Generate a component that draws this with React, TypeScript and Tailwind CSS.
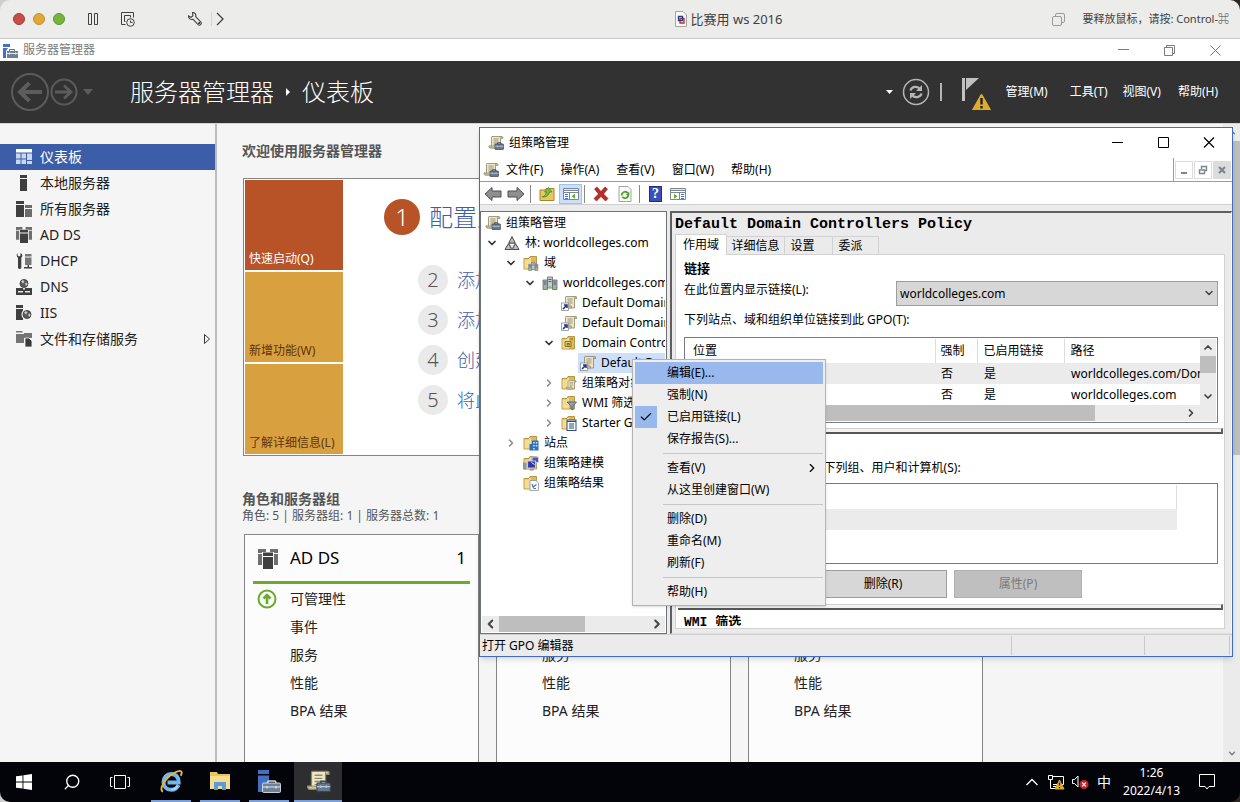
import type { ReactNode } from "react";
import { Check, ChevronDown, ChevronLeft, ChevronRight, ChevronUp, Search } from "lucide-react";
import clsx from "clsx";

/* ---------- small icons ---------- */

const Scroll = ({ x = 0, y = 0 }: { x?: number; y?: number }) => (
  <g transform={`translate(${x} ${y})`}>
    <path d="M4 1.5h9.5c1 0 1.5.8 1.2 1.8h-2.2V13H2.5c-1 0-1.6-.8-1.4-2h2.4V3C3.400 2 3.500 1.700 4 1.500z" fill="#efe6c2" stroke="#8a8468" strokeWidth=".8" />
    <path d="M12.500 3.300h2.200c.3-1-.2-1.800-1.200-1.800s-1.200 1-1 1.800zM1.100 11h8.400v2h-7c-1 0-1.600-1-1.400-2z" fill="#cfc59a" stroke="#8a8468" strokeWidth=".6" />
    <path d="M5.500 4h5M5.500 6h5M5.500 8h5M5.500 10h3" stroke="#8d8a7c" strokeWidth=".9" />
  </g>
);

const GpmcIcon = ({ className = "size-4" }: { className?: string }) => (
  <svg viewBox="0 0 16 16" className={clsx("shrink-0", className)}>
    <Scroll />
    <path d="M9.500 9V7.800h3.500V9" fill="none" stroke="#3a4a5c" />
    <rect x="7" y="9" width="8.500" height="5.500" rx=".6" fill="#66788c" stroke="#36465a" strokeWidth=".7" />
    <path d="M7 11.300h8.500M9.500 10.500v1.700M13 10.500v1.700" stroke="#b9c6d4" strokeWidth=".8" />
  </svg>
);

const ServerManagerIcon = ({ className = "size-[15px]" }: { className?: string }) => (
  <svg viewBox="0 0 24 24" className={clsx("shrink-0", className)}>
    <path d="M1 1h11v4H1zM1 6.500h11V23H1z" fill="#4470c4" />
    <path d="M10.500 15v-1.500c0-1 .6-1.500 1.500-1.500h5.500c1 0 1.500.5 1.500 1.500V15" fill="none" stroke="#d5dce4" strokeWidth="1.400" />
    <rect x="5.500" y="14" width="18" height="9.500" rx="1.200" fill="#6f8196" stroke="#eef1f4" strokeWidth=".8" />
    <path d="M6 18h17M10 17v2.500M19 17v2.500" stroke="#e2e8ee" strokeWidth="1.200" />
  </svg>
);

const Folder = ({ children }: { children?: ReactNode }) => (
  <svg viewBox="0 0 16 16" className="size-4 shrink-0">
    <path d="M1 3.500h5l1-2h6.500v12.500H1z" fill="#ddb95a" stroke="#a8842e" strokeWidth=".8" />
    <path d="M1.500 4.500h4l1-1.500H8v10.500H1.500z" fill="#f3dd94" />
    {children}
  </svg>
);

const LinkIcon = () => (
  <svg viewBox="0 0 16 16" className="size-4 shrink-0">
    <Scroll x={1} />
    <rect x=".5" y="8" width="7" height="7.500" fill="#fff" stroke="#8a8f99" strokeWidth=".8" />
    <path d="M2 14l3.500-3.500M3 10h3v3" fill="none" stroke="#26368c" strokeWidth="1.600" />
  </svg>
);

const ForestIcon = () => (
  <svg viewBox="0 0 16 16" className="size-4 shrink-0">
    <path d="M8 1.500l3.200 6.500H4.800zM4.500 8.500l3.300 6H1zM11.500 8.500l3.500 6H8.200z" fill="#bdbdbd" stroke="#4c4c4c" strokeWidth="1" />
    <path d="M5 8.500h6l-3 5.500z" fill="#efefef" stroke="#5c5c5c" strokeWidth=".7" />
  </svg>
);

const Towers = () => (
  <g>
    <path d="M1 5h4.500v9.500H1zM10.500 5H15v9.500h-4.500z" fill="#a4acb6" stroke="#5f6873" strokeWidth=".8" />
    <path d="M5.500 2H10.500v11H5.500z" fill="#c4cad2" stroke="#5f6873" strokeWidth=".8" />
    <path d="M2 7h2.500M2 9h2.500M11.500 7H14M11.500 9H14M6.500 4.500h3M6.500 6.500h3" stroke="#4b5663" strokeWidth=".9" />
    <path d="M3 12h2v2H3zM7 11h2v2H7zM12 12h2v2h-2z" fill="#7fd13a" />
  </g>
);

const DomainIcon = () => (
  <svg viewBox="0 0 16 16" className="size-4 shrink-0">
    <Towers />
  </svg>
);

const DomainsFolder = () => (
  <Folder>
    <g transform="translate(5 6) scale(.66)">
      <Towers />
    </g>
  </Folder>
);

const OuIcon = () => (
  <Folder>
    <path d="M4 6.500h6v5H4z" fill="#e9d082" stroke="#7c6420" strokeWidth=".9" />
    <path d="M6 8.500h2.500v1.500H6zM9 4h3" fill="none" stroke="#7c6420" />
  </Folder>
);

const GpoFolder = () => (
  <Folder>
    <g transform="translate(4.500 4.500) scale(.72)">
      <Scroll />
    </g>
  </Folder>
);

const WmiFolder = () => (
  <Folder>
    <path d="M6 7h9.500l-3.500 4v4l-2-1v-3z" fill="#8ba4bd" stroke="#43596f" strokeWidth=".8" />
  </Folder>
);

const StarterFolder = () => (
  <Folder>
    <rect x="6" y="5" width="9" height="10.500" fill="#f4f7fb" stroke="#31507f" />
    <path d="M6 6.500h9M8 9h5M8 11h5M8 13h5" stroke="#31507f" strokeWidth="1.100" />
  </Folder>
);

const SitesFolder = () => (
  <Folder>
    <path d="M9 5.500h6.500v10H9zM6.500 9H9v6.500H6.500z" fill="#2f6fc0" />
    <path d="M10.200 7h1.500v1.500h-1.500zM12.800 7h1.500v1.500h-1.500zM10.200 10h1.500v1.500h-1.500zM12.800 10h1.500v1.500h-1.500zM10.200 13h1.500v1.500h-1.500z" fill="#d9e9fb" />
  </Folder>
);

const ModelingIcon = () => (
  <Folder>
    <path d="M9 2h6.500v5.500H9z" fill="#4a52c8" stroke="#cfd3de" />
    <path d="M4.500 6h8v7h-8z" fill="#2c36b4" stroke="#c3c7d1" strokeWidth="1.200" />
    <path d="M0 7.500h3.500v7H0zM6.500 14h4v1.500h-4z" fill="#8f96a3" />
    <path d="M8.500 7.500l3 2" stroke="#e9ecf5" />
  </Folder>
);

const ResultsIcon = () => (
  <Folder>
    <path d="M7 5.500h6l2.500 2.500v7.500H7z" fill="#fbfcfd" stroke="#8a929c" strokeWidth=".8" />
    <path d="M9 9l1.500 4M13.500 9.500L10 12M10.500 13.500H13" fill="none" stroke="#4576b5" strokeWidth="1.200" />
  </Folder>
);

/* server manager role icons */

const DashboardIcon = () => (
  <svg viewBox="0 0 16 16" className="size-4" fill="#c9d8f2">
    <path d="M0 0h16v3.500H0z" fill="#fff" />
    <path d="M0 4.500h4.500v5H0zM5.500 4.500h4.500v5H5.500zM11 4.500h5V11h-5zM0 10.500h4.500V15H0zM5.500 10.500H10V15H5.500zM11 12h5v3h-5z" />
  </svg>
);

const LocalServerIcon = () => (
  <svg viewBox="0 0 16 16" className="size-4" fill="#3f3f3f">
    <path d="M4 0h7v3H4zM4 4h7v12H4z" />
  </svg>
);

const AllServersIcon = () => (
  <svg viewBox="0 0 16 16" className="size-4" fill="#3f3f3f">
    <path d="M0 0h8v3H0zM0 4h8v12H0z" />
    <path d="M9 4h7v3H9zM9 8h7v8H9z" fill="#6c6c6c" />
  </svg>
);

const AdDsIcon = ({ className = "size-4" }: { className?: string }) => (
  <svg viewBox="0 0 20 20" className={className} fill="#6f6f6f">
    <path d="M0 0h8v3H4v1H0zM12 0h8v4h-4V3h-4zM0 5h4v11H0zM16 5h4v11h-4z" />
    <path d="M5 3.500h10V7H5zM5 8h10v12H5z" fill="#404040" />
  </svg>
);

const DhcpIcon = () => (
  <svg viewBox="0 0 16 16" className="size-4">
    <path d="M1.500 0v2.500l1.500 1 1.500-1V0c2 .8 2.500 3.200.8 4.800V15c-.8 1.300-2.800 1.300-3.300 0V4.800C.3 3.500.300 1 1.500 0z" fill="#3f3f3f" />
    <path d="M9 1h6.500v2.500H9zM9 4.500h6.500V12H9z" fill="#777" />
    <path d="M8 14h8v1.500H8zM11.500 12h1.500v2h-1.500z" fill="#3f3f3f" />
  </svg>
);

const Globe = ({ cx, cy, r }: { cx: number; cy: number; r: number }) => (
  <g>
    <circle cx={cx} cy={cy} r={r} fill="#5a5a5a" stroke="#444" />
    <path d={`M${cx - 3} ${cy - 2}l2-1.500 1.500 1.500-1.500 2zM${cx + 1} ${cy}l2-1 .5 2-1.500 1.500z`} fill="#c9c9c9" />
  </g>
);

const DnsIcon = () => (
  <svg viewBox="0 0 16 16" className="size-4">
    <Globe cx={8} cy={4.500} r={4} />
    <path d="M0 9h16v7H0z" fill="#3f3f3f" />
    <path d="M2 12h5v1.500H2zM9 12h5v1.500H9zM7 9h2v1.500H7z" fill="#e6e6e6" />
  </svg>
);

const IisIcon = () => (
  <svg viewBox="0 0 16 16" className="size-4">
    <path d="M0 0h7v3H0zM0 4h7v11H0z" fill="#3f3f3f" />
    <circle cx="11" cy="9.500" r="5.500" fill="#f5f5f5" />
    <Globe cx={11} cy={9.500} r={4} />
  </svg>
);

const FilesIcon = () => (
  <svg viewBox="0 0 16 16" className="size-4">
    <path d="M0 0h6l1 1.500H0zM0 3h8V2h8v5H8v5H0z" fill="#747474" />
    <path d="M9 7h4l3 3v6H9z" fill="#3a3a3a" stroke="#f5f5f5" strokeWidth=".8" />
  </svg>
);

/* ---------- data ---------- */

const navItems = [
  { label: "仪表板", icon: <DashboardIcon />, active: true },
  { label: "本地服务器", icon: <LocalServerIcon /> },
  { label: "所有服务器", icon: <AllServersIcon /> },
  { label: "AD DS", icon: <AdDsIcon /> },
  { label: "DHCP", icon: <DhcpIcon /> },
  { label: "DNS", icon: <DnsIcon /> },
  { label: "IIS", icon: <IisIcon /> },
  { label: "文件和存储服务", icon: <FilesIcon />, expandable: true },
];

const steps = ["添加角色和功能", "添加要管理的其他服务器", "创建服务器组", "将此服务器连接到云服务"];

const roleRows = ["可管理性", "事件", "服务", "性能", "BPA 结果"];

type Node = { level: number; label: string; icon: ReactNode; state?: "open" | "closed"; selected?: boolean };

const tree: Node[] = [
  { level: 0, label: "组策略管理", icon: <GpmcIcon /> },
  { level: 1, label: "林: worldcolleges.com", icon: <ForestIcon />, state: "open" },
  { level: 2, label: "域", icon: <DomainsFolder />, state: "open" },
  { level: 3, label: "worldcolleges.com", icon: <DomainIcon />, state: "open" },
  { level: 4, label: "Default Domain Controllers Policy", icon: <LinkIcon /> },
  { level: 4, label: "Default Domain Policy", icon: <LinkIcon /> },
  { level: 4, label: "Domain Controllers", icon: <OuIcon />, state: "open" },
  { level: 5, label: "Default Domain Controllers Policy", icon: <LinkIcon />, selected: true },
  { level: 4, label: "组策略对象", icon: <GpoFolder />, state: "closed" },
  { level: 4, label: "WMI 筛选器", icon: <WmiFolder />, state: "closed" },
  { level: 4, label: "Starter GPO", icon: <StarterFolder />, state: "closed" },
  { level: 2, label: "站点", icon: <SitesFolder />, state: "closed" },
  { level: 2, label: "组策略建模", icon: <ModelingIcon /> },
  { level: 2, label: "组策略结果", icon: <ResultsIcon /> },
];

const links = [
  ["Domain Controllers", "否", "是", "worldcolleges.com/Domain Controllers"],
  ["worldcolleges.com", "否", "是", "worldcolleges.com"],
];

type MenuEntry = { label: string; checked?: boolean; active?: boolean; submenu?: boolean } | null;

const contextMenu: MenuEntry[] = [
  { label: "编辑(E)...", active: true },
  { label: "强制(N)" },
  { label: "已启用链接(L)", checked: true },
  { label: "保存报告(S)..." },
  null,
  { label: "查看(V)", submenu: true },
  { label: "从这里创建窗口(W)" },
  null,
  { label: "删除(D)" },
  { label: "重命名(M)" },
  { label: "刷新(F)" },
  null,
  { label: "帮助(H)" },
];

/* ---------- host bar and server manager ---------- */

const HostBar = () => (
  <header className="flex h-[39px] shrink-0 items-center border-b border-[#c9c9c9] bg-[#ececea] text-[#414141]">
    <div className="flex w-[54.4%] shrink-0 items-center pl-[13px]">
      <div className="flex gap-2">
        <button aria-label="关闭" className="size-3 rounded-full border border-[#a83c38] bg-[#c44f49]" />
        <button aria-label="最小化" className="size-3 rounded-full border border-[#c4902c] bg-[#dfa837]" />
        <button aria-label="全屏" className="size-3 rounded-full border border-[#5c962d] bg-[#76b43c]" />
      </div>
      <button aria-label="暂停" className="ml-[22px]">
        <svg viewBox="0 0 12 14" className="h-3.5 w-3" fill="none" stroke="currentColor">
          <path d="M1.500 1.500h3v11h-3zM7.500 1.500h3v11h-3z" />
        </svg>
      </button>
      <button aria-label="快照" className="ml-[21px]">
        <svg viewBox="0 0 16 16" className="size-4" fill="none" stroke="currentColor">
          <path d="M5.500 13.500h-4v-12h12v5M5.500 10.500h-1v-6h6v2" />
          <circle cx="10.500" cy="11.500" r="3.800" />
          <path d="M10.500 9.500v2h2" />
        </svg>
      </button>
      <button aria-label="设置" className="ml-[51px]">
        <svg viewBox="0 0 16 16" className="size-4" fill="none" stroke="currentColor" strokeWidth="1.100">
          <path d="M5.500 1.500C7.800 1.300 9.300 3.200 8.700 5.700l5.400 5.600c1 1.800-1.200 3.700-2.800 2.600L6.200 8.300C3.800 9 1.500 7.500 1.500 5l2.600 1.300 1.800-1.600z" />
          <circle cx="12.200" cy="12.200" r=".6" />
        </svg>
      </button>
      <div className="ml-2 h-3.5 w-px bg-[#d4d4d4]" />
      <button aria-label="展开" className="ml-1">
        <svg viewBox="0 0 8 14" className="h-3.5 w-2" fill="none" stroke="currentColor" strokeWidth="1.300">
          <path d="M1 1l6 6-6 6" />
        </svg>
      </button>
    </div>
    <div className="flex items-center gap-1">
      <svg viewBox="0 0 12 16" className="h-4 w-3">
        <path d="M.5.5H8L11.500 4v11.500H.5z" fill="#fafafa" stroke="#a5a5a5" />
        <path d="M5 7.500h4v4.500H5z" fill="none" stroke="#c92a2a" strokeWidth="1.400" />
        <path d="M3.500 5.500h4v4h-4z" fill="none" stroke="#27408b" strokeWidth="1.400" />
      </svg>
      <h1 className="text-[13px] leading-5 whitespace-nowrap">比赛用 ws 2016</h1>
    </div>
    <div className="flex flex-1 items-center justify-end gap-[17px] pr-[11px]">
      <svg viewBox="0 0 13 13" className="size-[13px]" fill="none" stroke="#9a9a9a">
        <rect x="3.500" y=".5" width="9" height="9" rx="1.500" />
        <rect x=".5" y="3.500" width="9" height="9" rx="1.500" fill="#ececea" />
      </svg>
      <span className="text-[11px] leading-4">要释放鼠标，请按: Control-⌘</span>
    </div>
  </header>
);

const ServerManagerHeader = () => (
  <>
    <div className="flex h-[22px] shrink-0 items-center bg-white pr-[19px] pl-[3px] text-[#7b7b7b]">
      <svg viewBox="0 0 15 15" className="size-[15px]">
        <path d="M0 1h7v3H0zM0 5h5l-2 3v7H0z" fill="#4470c4" />
        <path d="M6.500 8.500v-2h5v2" fill="none" stroke="#5f7186" />
        <path d="M4 8h11v7H4z" fill="#6f8196" />
        <path d="M4 10.500h11M6.500 9.500v2M12.500 9.500v2" stroke="#e2e8ee" />
      </svg>
      <span className="ml-[5px] flex-1 text-xs">服务器管理器</span>
      <div className="flex gap-[35px]">
        <button aria-label="最小化">
          <svg viewBox="0 0 11 11" className="size-[11px]" stroke="currentColor">
            <path d="M0 4.500h11" />
          </svg>
        </button>
        <button aria-label="还原">
          <svg viewBox="0 0 11 11" className="size-[11px]" fill="none" stroke="currentColor">
            <path d="M.5 2.500h8v8h-8zM2.500 2.500v-2h8v8h-2" />
          </svg>
        </button>
        <button aria-label="关闭">
          <svg viewBox="0 0 11 11" className="size-[11px]" stroke="currentColor">
            <path d="M.5.5l10 10M10.500.5l-10 10" />
          </svg>
        </button>
      </div>
    </div>
    <div className="flex h-[62px] shrink-0 items-center bg-[#323232] pr-[22px] pl-[11px] text-white">
      <svg viewBox="0 0 82 38" className="h-[38px] w-[82px]" fill="none" stroke="#5c5c5c" strokeWidth="2">
        <circle cx="19" cy="19" r="18" />
        <path d="M31 19H10M18.500 10L9 19l9.500 9" strokeWidth="4" />
        <circle cx="53" cy="19" r="12.500" />
        <path d="M44 19h15M53 12.500l7 6.500-7 6.500" strokeWidth="2.800" />
        <path d="M72 16h10l-5 6z" fill="#5c5c5c" stroke="none" />
      </svg>
      <nav className="ml-[37px] flex flex-1 items-center text-2xl font-light">
        <a href="#server-manager">服务器管理器</a>
        <svg viewBox="0 0 4 8" className="mx-3 h-2 w-1" fill="#fff">
          <path d="M0 0l4 4-4 4z" />
        </svg>
        <span>仪表板</span>
      </nav>
      <svg viewBox="0 0 58 28" className="h-7 w-[58px]" fill="none" stroke="#b5b5b5">
        <path d="M0 12h7l-3.500 4z" fill="#fff" stroke="none" />
        <circle cx="30" cy="14" r="12.500" strokeWidth="1.500" />
        <path d="M24.500 12.500c1-4 7-5 9.500-1.500M35.500 15.500c-1 4-7 5-9.500 1.500" strokeWidth="2.200" />
        <path d="M36 7v6h-6zM24 21v-6h6z" fill="#b5b5b5" stroke="none" />
        <path d="M55 5v18" strokeWidth="2" />
      </svg>
      <svg viewBox="0 0 30 36" className="ml-[18px] h-9 w-[30px]">
        <path d="M0 4h3v23H0zM4 4h13L4 16z" fill="#c1c1c1" />
        <path d="M19.500 21l8.500 15H11z" fill="#e0ab2c" stroke="#e0ab2c" strokeLinejoin="round" strokeWidth="2" />
        <path d="M19.500 24v6.500M19.500 32v2.500" stroke="#222" strokeWidth="2.400" />
      </svg>
      <nav className="ml-[14px] flex text-xs">
        <button>管理(M)</button>
        <button className="ml-[22px]">工具(T)</button>
        <button className="ml-[15px]">视图(V)</button>
        <button className="ml-[17px]">帮助(H)</button>
      </nav>
    </div>
  </>
);

const Sidebar = () => (
  <nav className="w-[217px] shrink-0 border-r-2 border-[#bcbcbc] pt-5">
    {navItems.map((item) => (
      <a
        key={item.label}
        href="#role"
        className={clsx("flex h-[26px] items-center gap-2 pr-1 pl-4 text-sm", item.active ? "bg-[#3c5da8] text-white" : "text-[#222]")}
      >
        {item.icon}
        <span className="flex-1">{item.label}</span>
        {item.expandable && (
          <svg viewBox="0 0 8 12" className="h-3 w-2" fill="none" stroke="#333">
            <path d="M1.500 1.500L6.500 6l-5 4.500z" />
          </svg>
        )}
      </a>
    ))}
  </nav>
);

const RoleCard = ({ title, icon }: { title: string; icon: ReactNode }) => (
  <article className="min-h-[300px] w-[235px] shrink-0 border border-[#858585] bg-[#fcfcfc] px-2 text-sm text-[#222]">
    <div className="flex h-[46px] items-center pt-px pr-1 pl-[5px] text-[17px] text-black">
      {icon}
      <h3 className="ml-3 flex-1">{title}</h3>
      <span>1</span>
    </div>
    <div className="h-[3px] bg-[#6aab27]" />
    <ul className="pt-px">
      {roleRows.map((row, i) => (
        <li key={row} className="flex h-7 items-center">
          <span className="w-[37px] pl-1">
            {i === 0 && (
              <svg viewBox="0 0 20 20" className="size-5" fill="none" stroke="#6aab27" strokeWidth="2">
                <circle cx="10" cy="10" r="8.500" />
                <path d="M10 15V7M6.500 9.500L10 6l3.500 3.500" strokeWidth="2.600" />
              </svg>
            )}
          </span>
          {row}
        </li>
      ))}
    </ul>
  </article>
);

const Dashboard = () => (
  <main className="flex min-w-0 flex-1 flex-col overflow-hidden pt-[17px] pl-[25px] text-[#555]">
    <h2 className="text-sm leading-5 font-bold">欢迎使用服务器管理器</h2>
    <section className="mt-[17px] ml-px flex shrink-0 border border-[#858585] bg-white p-px">
      <div className="flex w-[98px] shrink-0 flex-col gap-0.5 text-xs text-[#5f3410]">
        <button className="flex h-[90px] items-end bg-[#b75327] px-1 pb-[3px] text-white">快速启动(Q)</button>
        <button className="flex h-[90px] items-end bg-[#d9a03f] px-1 pb-[3px]">新增功能(W)</button>
        <button className="flex h-[90px] items-end bg-[#d9a03f] px-1 pb-[3px]">了解详细信息(L)</button>
      </div>
      <div className="flex min-w-0 flex-col gap-2.5 pt-[19px] pl-[41px] font-light text-[#3c5da8]">
        <a href="#step" className="mb-5 flex items-center gap-[9px] text-2xl leading-9">
          <span className="flex size-9 items-center justify-center rounded-full bg-[#b75327] text-white">1</span>
          配置此本地服务器
        </a>
        {steps.map((step, i) => (
          <a key={step} href="#step" className="ml-[34px] flex items-center gap-[9px] text-lg leading-[30px]">
            <span className="flex size-[30px] items-center justify-center rounded-full bg-[#eaeaea] text-xl text-[#555]">{i + 2}</span>
            {step}
          </a>
        ))}
      </div>
    </section>
    <h2 className="mt-[34px] text-sm leading-[18px] font-bold">角色和服务器组</h2>
    <p className="text-xs leading-4">角色: 5 | 服务器组: 1 | 服务器总数: 1</p>
    <div className="mt-2.5 ml-0.5 flex gap-[17px]">
      <RoleCard title="AD DS" icon={<AdDsIcon className="size-5" />} />
      <RoleCard title="DHCP" icon={<DhcpIcon />} />
      <RoleCard title="DNS" icon={<DnsIcon />} />
    </div>
  </main>
);

const PageScrollbar = () => (
  <div className="flex w-[17px] shrink-0 flex-col items-center bg-[#ebebeb] text-[#777]">
    <ChevronUp className="h-[17px] w-2.5" strokeWidth={3} />
    <div className="w-full flex-1">
      <div className="h-[52%] bg-[#bebebe]" />
    </div>
    <ChevronDown className="h-[17px] w-2.5" strokeWidth={3} />
  </div>
);

/* ---------- group policy management window ---------- */

const PanelFrame = () => (
  <>
    <path d="M.5 2.500h15v11H.5z" fill="#fff" stroke="#7d8796" />
    <path d="M1 4.500h14M1 6.500h14" stroke="#7d8796" />
    <path d="M1 3.500h14" stroke="#dfe5ee" />
  </>
);

const Toolbar = () => (
  <div className="flex h-[23px] shrink-0 items-center border-b border-[#cfcfcf] pt-0.5 pl-1">
    <button aria-label="后退">
      <svg viewBox="0 0 18 16" className="h-4 w-[18px]">
        <path d="M1 8l7-6.500v3.500h9v6H8v3.500z" fill="#8f8f8f" stroke="#4f4f4f" />
      </svg>
    </button>
    <button aria-label="前进" className="ml-[5px]">
      <svg viewBox="0 0 18 16" className="h-4 w-[18px]">
        <path d="M17 8l-7-6.500v3.500H1v6h9v3.500z" fill="#8f8f8f" stroke="#4f4f4f" />
      </svg>
    </button>
    <div className="ml-[5px] h-[18px] w-px bg-[#8a8a8a]" />
    <button aria-label="上移" className="ml-2">
      <svg viewBox="0 0 16 16" className="size-4">
        <path d="M1 4h5l1-1.500h8V14.500H1z" fill="#eac765" stroke="#a8842e" />
        <path d="M3 11c2-.5 4-2 4.500-5H5.500L9.500 1.500 13 6h-2.500c-.5 3-3 5.500-7.500 5z" fill="#79c043" stroke="#3f7d1d" strokeWidth=".7" />
      </svg>
    </button>
    <button aria-label="显示控制台树" aria-pressed="true" className="ml-1 flex h-5 w-[23px] items-center justify-center border border-[#9cc4f2] bg-[#cce0fa]">
      <svg viewBox="0 0 16 16" className="size-4">
        <PanelFrame />
        <path d="M6.500 7v6.500" stroke="#7d8796" />
        <path d="M2 8.500h3M2 10.500h3M2 12.500h3" stroke="#4576c5" />
        <path d="M12 7.800v5L8.500 10.300z" fill="#5caf2f" />
      </svg>
    </button>
    <div className="ml-0.5 h-[18px] w-px bg-[#8a8a8a]" />
    <button aria-label="删除" className="ml-2">
      <svg viewBox="0 0 16 16" className="size-4">
        <path d="M1.500 3L4 1l4 4.500L12 1l2.500 2-4 5 4.500 4.500-2.500 2.500L8 10.500 3.500 15 1 12.500 5.500 8z" fill="#bb2c28" stroke="#7e1915" strokeWidth=".6" />
      </svg>
    </button>
    <button aria-label="刷新" className="ml-2">
      <svg viewBox="0 0 16 16" className="size-4">
        <path d="M2 .5h9l3 3v12H2z" fill="#fafafa" stroke="#a3a3a3" />
        <path d="M4.800 9.500C4.500 6 9 4.500 10.800 7.200M11.300 8.500c.2 3.500-4 5-6 2.300" fill="none" stroke="#52a52b" strokeWidth="1.800" />
        <path d="M12.300 5.500v3.500H8.800z" fill="#52a52b" />
      </svg>
    </button>
    <div className="ml-1.5 h-[18px] w-px bg-[#8a8a8a]" />
    <button aria-label="帮助" className="ml-[9px] flex h-4 w-[13px] items-center justify-center border border-[#1f2d86] bg-[#3a50b8] font-['Liberation_Serif',serif] text-sm leading-4 font-bold text-white">
      ?
    </button>
    <button aria-label="操作窗格" className="ml-2">
      <svg viewBox="0 0 16 16" className="size-4">
        <PanelFrame />
        <path d="M9.500 7v6.500" stroke="#7d8796" />
        <path d="M11 8.500h3M11 10.500h3M11 12.500h3" stroke="#4576c5" />
        <path d="M4 7.800v5l3.500-2.500z" fill="#5caf2f" />
      </svg>
    </button>
  </div>
);

const TreePane = () => (
  <div className="flex w-[187px] shrink-0 flex-col overflow-hidden border border-[#6d717a] bg-white p-px">
    <ul className="flex-1 overflow-hidden text-xs whitespace-nowrap">
      {tree.map((node, i) => (
        // one 19px step per tree level
        <li key={i} className="flex h-5 items-center" style={{ paddingLeft: Math.max(node.level - 1, 0) * 19 + (node.level ? 4 : 1) }}>
          {node.level > 0 && (
            <span className="w-4 shrink-0">
              {node.state === "open" && <ChevronDown className="size-3 text-[#333]" strokeWidth={3.500} />}
              {node.state === "closed" && <ChevronRight className="size-3 text-[#8a8a8a]" strokeWidth={3} />}
            </span>
          )}
          <span className={clsx("flex h-5 flex-1 items-center gap-[5px] pl-0.5", node.selected && "bg-[#cce0fb]")}>
            {node.icon}
            {node.label}
          </span>
        </li>
      ))}
    </ul>
    <div className="flex h-4 items-center bg-[#ebebeb] text-[#444]">
      <ChevronLeft className="h-3.5 w-[17px] shrink-0" strokeWidth={3.500} />
      <div className="h-full flex-1">
        <div className="h-full w-[57%] bg-[#bebebe]" />
      </div>
      <ChevronRight className="h-3.5 w-4 shrink-0" strokeWidth={3.500} />
    </div>
  </div>
);

const LinksTable = () => (
  <div className="mt-2 border border-[#767a82] p-px">
    <div className="flex">
      <div className="min-w-0 flex-1 overflow-hidden">
        <table className="w-full table-fixed text-left text-xs whitespace-nowrap">
          <thead>
            <tr className="h-6">
              <th className="px-[7px] font-normal">位置</th>
              <th className="w-[42px] border-l border-[#dcdcdc] px-[5px] font-normal">强制</th>
              <th className="w-[87px] border-l border-[#dcdcdc] px-1.5 font-normal">已启用链接</th>
              <th className="w-[136px] border-l border-[#dcdcdc] px-1.5 font-normal">路径</th>
            </tr>
          </thead>
          <tbody>
            {links.map(([place, enforced, enabled, path]) => (
              <tr key={place} className="h-[21px] odd:bg-[#ebebeb]">
                <td className="px-[7px]">{place}</td>
                <td className="px-1.5">{enforced}</td>
                <td className="px-[7px]">{enabled}</td>
                <td className="overflow-hidden pl-[7px]">{path}</td>
              </tr>
            ))}
          </tbody>
        </table>
      </div>
      <div className="flex w-4 flex-col items-center bg-[#ebebeb] text-[#444]">
        <ChevronUp className="h-[17px] w-3" strokeWidth={3.500} />
        <div className="w-full flex-1">
          <div className="h-[17px] bg-[#bebebe]" />
        </div>
        <ChevronDown className="h-[17px] w-3" strokeWidth={3.500} />
      </div>
    </div>
    <div className="flex h-4 items-center bg-[#ebebeb] pr-4 text-[#444]">
      <ChevronLeft className="h-3 w-[15px]" strokeWidth={3.500} />
      <div className="h-full flex-1">
        <div className="h-full w-[82%] bg-[#bebebe]" />
      </div>
      <ChevronRight className="h-3 w-[18px]" strokeWidth={3.500} />
    </div>
  </div>
);

const Splitter = ({ className }: { className: string }) => (
  <div className={clsx("mr-px ml-0.5 h-1.5 shrink-0 border-t border-r-2 border-b-2 border-t-[#cfcfcf] border-r-[#606060] border-b-[#565656] bg-[#f2f2f2]", className)} />
);

const DetailPane = () => (
  <div className="ml-[3px] flex min-w-0 flex-1 flex-col border-t-2 border-r border-b border-l-2 border-t-[#5f5f5f] border-r-[#fafafa] border-b-[#dedede] border-l-[#5f5f5f] pr-1.5 pb-1 pl-[3px]">
    <h2 className="h-[21px] font-['Liberation_Mono','Noto_Sans_CJK_SC',monospace] text-[15px] leading-6 font-bold whitespace-nowrap">
      Default Domain Controllers Policy
    </h2>
    <div role="tablist" className="z-10 -mb-px flex h-[21px] items-end text-xs">
      <button role="tab" aria-selected="true" className="h-[21px] w-[52px] border border-b-0 border-[#d2d2d2] bg-white">作用域</button>
      <button role="tab" className="mb-px h-[18px] w-[58px] border-t border-r border-[#d2d2d2] leading-4">详细信息</button>
      <button role="tab" className="mb-px h-[18px] w-12 border-t border-r border-[#d2d2d2] pr-3 leading-4">设置</button>
      <button role="tab" className="mb-px h-[18px] w-[46px] border-t border-r border-[#d2d2d2] pr-2.5 leading-4">委派</button>
    </div>
    <div className="flex min-h-0 flex-1 flex-col overflow-hidden border border-[#d2d2d2] bg-white text-xs">
      <section className="pt-1 pr-1.5 pl-2 leading-[18px]">
        <h3 className="text-[13px] font-bold">链接</h3>
        <div className="mt-1 flex items-start">
          <label htmlFor="scope" className="w-[212px] shrink-0">在此位置内显示链接(L):</label>
          <div className="relative flex-1">
            <select id="scope" className="block h-[25px] w-full appearance-none border border-[#9d9d9d] bg-[#d7d7d7] px-[3px] text-xs">
              <option>worldcolleges.com</option>
            </select>
            <ChevronDown className="pointer-events-none absolute top-1.5 right-[3px] size-3 text-[#444]" strokeWidth={3} />
          </div>
        </div>
        <p className="mt-[5px]">下列站点、域和组织单位链接到此 GPO(T):</p>
        <LinksTable />
      </section>
      <Splitter className="mt-[5px]" />
      <section className="pt-[3px] pr-1.5 pl-2 leading-[18px]">
        <h3 className="text-[13px] font-bold">安全筛选</h3>
        <p className="mt-1">此 GPO 内的设置只应用于下列组、用户和计算机(S):</p>
        <div className="mt-1.5 h-[81px] border border-[#767a82] p-px pr-10">
          <div className="h-6 border-r border-[#dcdcdc] px-1.5 leading-6">名称</div>
          <div className="h-[21px] bg-[#ebebeb]" />
        </div>
        <div className="mt-1.5 flex gap-[7px]">
          <button className="h-7 w-32 border border-[#9d9d9d] bg-[#d7d7d7]">添加(D)...</button>
          <button className="h-7 w-32 border border-[#9d9d9d] bg-[#d7d7d7]">删除(R)</button>
          <button disabled className="h-7 w-32 border border-[#b0b0b0] bg-[#bfbfbf] text-[#7c7c7c]">属性(P)</button>
        </div>
      </section>
      <Splitter className="mt-1.5" />
      <section className="mt-1 h-3 shrink-0 overflow-hidden pl-2">
        <h3 className="font-['Liberation_Mono','Noto_Sans_CJK_SC',monospace] text-[13px] leading-[18px] font-bold">WMI 筛选</h3>
      </section>
    </div>
  </div>
);

const ContextMenu = () => (
  <div role="menu" className="absolute top-[231px] left-[152px] z-20 w-[194px] border border-[#b3b3b3] bg-[#eeeeee] p-0.5 text-xs shadow-sm">
    {contextMenu.map((entry, i) =>
      entry === null ? (
        <div key={i} className="flex h-[7px] items-center pl-7">
          <div className="h-px flex-1 bg-[#c6c6c6]" />
        </div>
      ) : (
        <button key={i} role="menuitem" className={clsx("flex h-[22px] w-full items-center text-left", entry.active && "bg-[#99b8ee]")}>
          <span className={clsx("mr-2.5 flex size-[22px] items-center justify-center", entry.checked && "bg-[#99b8ee]")}>
            {entry.checked && <Check className="size-3.5" />}
          </span>
          <span className="flex-1">{entry.label}</span>
          {entry.submenu && <ChevronRight className="mr-1 size-3.5" />}
        </button>
      )
    )}
  </div>
);

const GpmcWindow = () => (
  <div className="absolute top-[127px] right-[7px] bottom-[145px] left-[479px] z-10 flex flex-col border border-[#426bc6] bg-white text-black shadow-md">
    <div className="flex h-[30px] shrink-0 items-center pr-[17px] pl-2 text-xs">
      <GpmcIcon />
      <span className="ml-[5px] flex-1">组策略管理</span>
      <div className="flex gap-[34px]">
        <button aria-label="最小化">
          <svg viewBox="0 0 12 12" className="size-3" stroke="#000">
            <path d="M1 5.500h11" />
          </svg>
        </button>
        <button aria-label="最大化">
          <svg viewBox="0 0 12 12" className="size-3" fill="none" stroke="#000">
            <path d="M1.500.5h10v10h-10z" />
          </svg>
        </button>
        <button aria-label="关闭">
          <svg viewBox="0 0 12 12" className="size-3" stroke="#000" strokeWidth="1.200">
            <path d="M1 .5l10 10M11 .5l-10 10" />
          </svg>
        </button>
      </div>
    </div>
    <div className="flex h-6 shrink-0 items-center border-b border-[#9b9b9b] pl-[3px] text-xs">
      <GpmcIcon />
      <nav className="ml-[7px] flex flex-1 gap-[17px]">
        <button>文件(F)</button>
        <button>操作(A)</button>
        <button>查看(V)</button>
        <button>窗口(W)</button>
        <button>帮助(H)</button>
      </nav>
      <div className="flex h-full items-center gap-px border-l border-[#9b9b9b] pr-px pl-px text-[#7c8494]">
        <button aria-label="最小化子窗口" className="border border-[#dcdcdc]">
          <svg viewBox="0 0 16 16" className="size-4" fill="currentColor">
            <path d="M5 10h6v2H5z" />
          </svg>
        </button>
        <button aria-label="还原子窗口" className="border border-[#dcdcdc]">
          <svg viewBox="0 0 16 16" className="size-4" fill="none" stroke="currentColor">
            <path d="M4.500 8h5v3.500h-5zM4 8h6M6.500 7V4.500h5v4H10M6 4.500h6" strokeWidth="1.400" />
          </svg>
        </button>
        <button aria-label="关闭子窗口" className="border border-[#dcdcdc] bg-[#dcdcdc]">
          <svg viewBox="0 0 16 16" className="size-4" stroke="currentColor" strokeWidth="2.200">
            <path d="M5 5l6 6M11 5l-6 6" />
          </svg>
        </button>
      </div>
    </div>
    <Toolbar />
    <div className="flex min-h-0 flex-1 bg-[#ebebeb] pt-1.5">
      <TreePane />
      <DetailPane />
    </div>
    <div className="flex h-[22px] shrink-0 items-center border-t border-[#cfcfcf] bg-[#ebebeb] pr-0.5 pl-0.5 text-xs">
      <span className="flex-1">打开 GPO 编辑器</span>
      <div className="h-[19px] w-[133px] border-l border-[#c9c9c9]" />
      <div className="h-[19px] w-[86px] border-r border-l border-[#c9c9c9]" />
    </div>
    <ContextMenu />
  </div>
);

/* ---------- taskbar ---------- */

const Taskbar = () => (
  <footer className="flex h-10 shrink-0 items-stretch bg-[#03040a] pr-[25px] text-white">
    <button aria-label="开始" className="flex w-12 items-center justify-center">
      <svg viewBox="0 0 16 16" className="size-4" fill="#fff">
        <path d="M0 2.300L6.500 1.400v6.200H0zM7.400 1.300L16 0v7.600H7.400zM0 8.400h6.500v6.200L0 13.700zM7.400 8.400H16V16l-8.600-1.300z" />
      </svg>
    </button>
    <button aria-label="搜索" className="flex w-12 items-center justify-center">
      <Search className="size-[18px] -scale-x-100" strokeWidth={1.800} />
    </button>
    <button aria-label="任务视图" className="flex w-12 items-center justify-center">
      <svg viewBox="0 0 20 16" className="h-4 w-5" fill="none" stroke="#fff">
        <path d="M4.500 1.500h11v13h-11zM2.500 3.500h-2v9h2M17.500 3.500h2v9h-2" />
      </svg>
    </button>
    <div className="ml-[7px] flex gap-[9px]">
      <button aria-label="Internet Explorer" className="flex w-10 items-center justify-center border-b-2 border-[#7aa0dc]">
        <svg viewBox="0 0 24 24" className="size-6" fill="none">
          <path d="M19.500 16c-1.300 3-4 4.800-7.300 4.800-4.500 0-7.700-3.300-7.700-7.800s3.200-8 7.700-8c4.800 0 7.800 3.500 7.500 8.500H8.500" stroke="#6fb7ec" strokeWidth="4" />
          <path d="M18.500 17c-1.500 2.300-3.700 3.500-6.300 3.500" stroke="#b4dcf8" strokeWidth="1.500" />
          <path d="M4 22.500c-3-.8-1.500-7 3.500-12.500S20 .8 22 2.300c1 .8.800 2.500-.3 4.500" stroke="#e9b830" strokeWidth="1.900" />
        </svg>
      </button>
      <button aria-label="文件资源管理器" className="flex w-10 items-center justify-center border-b-2 border-[#7aa0dc]">
        <svg viewBox="0 0 22 20" className="h-5 w-[22px]">
          <path d="M1 1h7l1 2h12v15H1z" fill="#e5c65a" />
          <path d="M1 5h20v13H1z" fill="#f4dd8c" />
          <path d="M5 19v-8h12v8h-4v-4H9v4z" fill="#5b9bdc" />
        </svg>
      </button>
      <button aria-label="服务器管理器" className="flex w-10 items-center justify-center border-b-2 border-[#7aa0dc]">
        <ServerManagerIcon className="size-6" />
      </button>
    </div>
    <button aria-label="组策略管理" className="ml-[5px] flex w-12 items-center justify-center border-b-2 border-[#7aa0dc] bg-[#2e2e30]">
      <GpmcIcon className="size-[25px]" />
    </button>
    <div className="flex flex-1 items-center justify-end text-xs">
      <svg viewBox="0 0 12 8" className="h-2 w-3" fill="none" stroke="#fff" strokeWidth="1.300">
        <path d="M.5 7L6 1.500 11.500 7" />
      </svg>
      <svg viewBox="0 0 17 16" className="ml-2.5 h-4 w-[17px]" fill="none" stroke="#fff">
        <path d="M.5 1.500h4v4h-4zM5 2.500h10.500v8H5M2.500 6v8.500H8M5 12.500h3" />
        <path d="M11.500 6l4.500 9H7z" fill="#e0ab2c" stroke="#e0ab2c" strokeLinejoin="round" />
        <path d="M11.500 8.500v3M11.500 13v1.300" stroke="#222" strokeWidth="1.300" />
      </svg>
      <svg viewBox="0 0 17 16" className="ml-[7px] h-4 w-[17px]" fill="none" stroke="#fff">
        <path d="M.5 5.500h2l3.500-3.500v11L2.500 9.500h-2z" />
        <circle cx="12" cy="10.500" r="4.500" fill="#c0282c" stroke="none" />
        <path d="M10.200 8.700l3.600 3.600M13.800 8.700l-3.600 3.600" strokeWidth="1.200" />
      </svg>
      <span className="ml-2 text-sm">中</span>
      <time className="ml-3 text-center leading-[18px]">
        1:26
        <br />
        2022/4/13
      </time>
      <svg viewBox="0 0 16 16" className="ml-[19px] size-4" fill="none" stroke="#fff">
        <path d="M.5.5h15v12H10L8 15l-2-2.500H.5z" />
      </svg>
    </div>
  </footer>
);

export default function App() {
  return (
    <div className="h-screen bg-linear-to-r from-[#cfcfcf] from-50% to-[#2c2620] to-50% font-['Noto_Sans','Noto_Sans_CJK_SC',sans-serif]">
      <div className="relative flex h-full flex-col overflow-hidden rounded-[10px]">
        <HostBar />
        <ServerManagerHeader />
        <div className="flex min-h-0 flex-1 border-t border-[#d5d5d5] bg-[#f5f5f5]">
          <Sidebar />
          <Dashboard />
          <PageScrollbar />
        </div>
        <GpmcWindow />
        <Taskbar />
      </div>
    </div>
  );
}
